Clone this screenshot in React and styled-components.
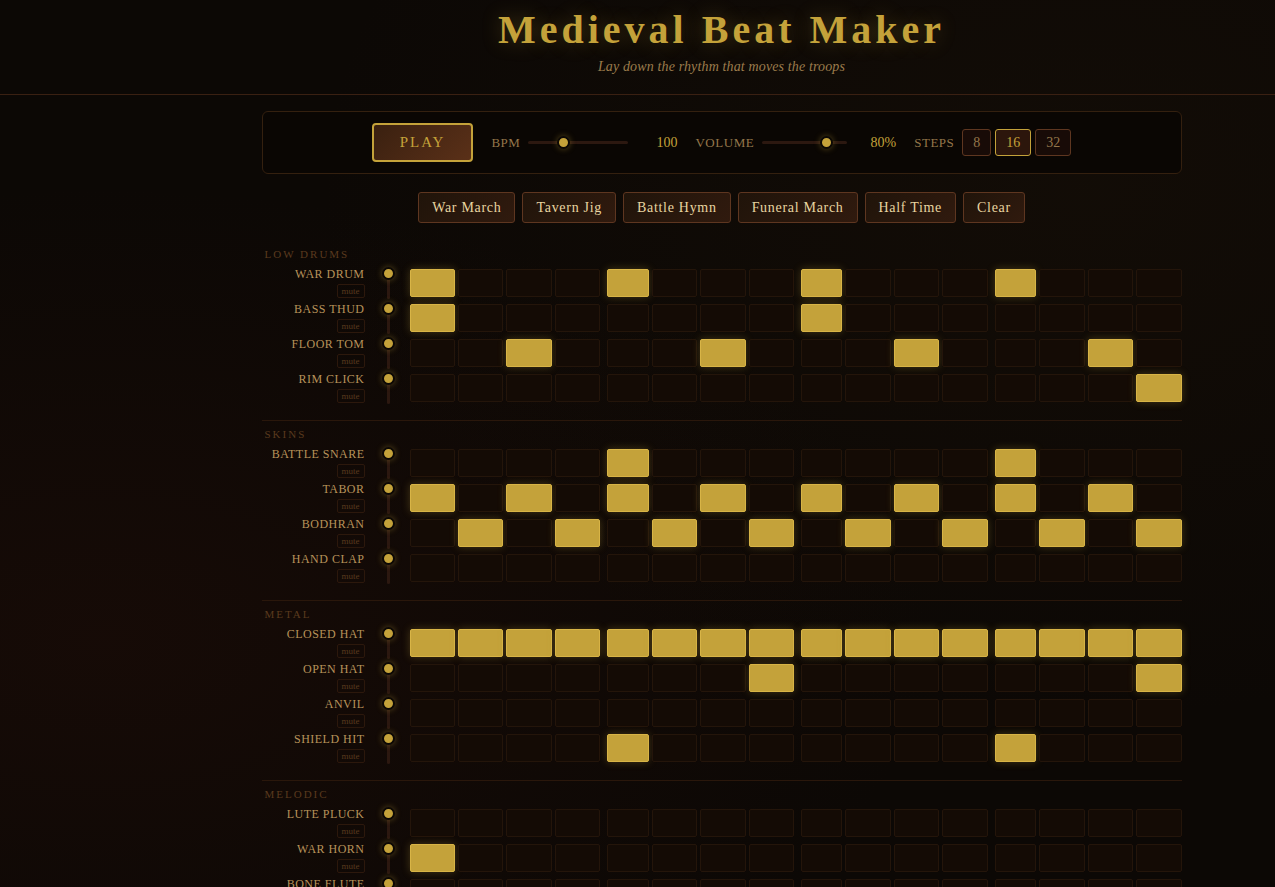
import { useState } from 'react';
import styled, { createGlobalStyle, css } from 'styled-components';

const GlobalStyle = createGlobalStyle`
  * {
    box-sizing: border-box;
  }

  html {
    background: #0c0805;
    scrollbar-width: none;
  }

  body {
    margin: 0;
    color: #c4a23a;
    font-family: 'Palatino Linotype', 'Book Antiqua', Palatino, 'Liberation Serif', serif;
    background:
      radial-gradient(ellipse at 8% 68%, rgba(58, 20, 12, 0.22) 0%, transparent 50%),
      radial-gradient(ellipse at 85% 20%, rgba(50, 34, 14, 0.16) 0%, transparent 50%),
      #0c0805;
  }

  button, input {
    font-family: inherit;
    margin: 0;
  }

  button {
    cursor: pointer;
  }
`;

const Header = styled.header`
  padding: 6px 0 16px 168px;
  border-bottom: 1px solid #3a2012;
  text-align: center;
`;

const Title = styled.h1`
  margin: 0;
  font-size: 40px;
  line-height: 48px;
  letter-spacing: 4px;
  text-shadow: 0 0 20px rgba(196, 162, 58, 0.3);
`;

const Tagline = styled.p`
  margin: 0;
  padding-top: 2px;
  color: #9c7c4c;
  font-size: 14px;
  line-height: 22px;
  letter-spacing: 0.01em;
  font-style: italic;
`;

const Main = styled.main`
  padding: 16px 0 16px 168px;
`;

const Container = styled.div`
  max-width: 920px;
  margin: 0 auto;
`;

const Controls = styled.section`
  display: flex;
  flex-wrap: wrap;
  align-items: center;
  justify-content: center;
  gap: 18px;
  padding: 11px;
  background: #0a0603;
  border: 1px solid #34200f;
  border-radius: 6px;
`;

const PlayButton = styled.button`
  height: 39px;
  padding: 0 26px;
  color: #c4a23a;
  font-size: 15px;
  letter-spacing: 2px;
  text-transform: uppercase;
  background: linear-gradient(135deg, #3a2010, #5a3018);
  border: 2px solid #c4a23a;
  border-radius: 4px;
`;

const Control = styled.div`
  display: flex;
  align-items: center;
  gap: 8px;
`;

const controlLabel = css`
  color: #94764a;
  font-size: 13px;
  letter-spacing: 0.04em;
  text-transform: uppercase;
`;

const Label = styled.label`
  ${controlLabel}
`;

const Caption = styled.span`
  ${controlLabel}
`;

const Value = styled.output`
  min-width: 40px;
  margin-left: 1px;
  font-size: 14px;
  text-align: right;
`;

const thumb = css`
  width: 13px;
  height: 13px;
  background: #c4a23a;
  border: 2px solid #0c0805;
  border-radius: 50%;
  box-shadow: 0 0 6px rgba(196, 162, 58, 0.4);
`;

const Slider = styled.input`
  appearance: none;
  width: ${({ $width }) => $width}px;
  height: 3px;
  background: #2c1810;
  border-radius: 2px;

  &::-webkit-slider-thumb {
    appearance: none;
    ${thumb}
  }
`;

const VolumeSlider = styled.input`
  appearance: none;
  justify-self: center;
  width: 3px;
  height: 32px;
  background: #2c1810;
  border-radius: 2px;
  writing-mode: vertical-lr;
  direction: rtl;

  &::-webkit-slider-thumb {
    appearance: none;
    ${thumb}
  }
`;

const StepOptions = styled.div`
  display: flex;
  gap: 4px;
`;

const StepOption = styled.button`
  height: 27px;
  padding: 0 10px;
  color: ${({ $active }) => ($active ? '#c4a23a' : '#94764a')};
  font-size: 14px;
  background: ${({ $active }) => ($active ? '#2c160c' : '#180b07')};
  border: 1px solid ${({ $active }) => ($active ? '#c4a23a' : '#5e3620')};
  border-radius: 3px;
`;

const Presets = styled.div`
  display: flex;
  flex-wrap: wrap;
  justify-content: center;
  gap: 7px;
  margin: 18px 0 17px;
`;

const PresetButton = styled.button`
  height: 31px;
  padding: 0 13px;
  color: #e8d5a0;
  font-size: 14px;
  letter-spacing: 0.05em;
  background: linear-gradient(135deg, #20140a, #301a0e);
  border: 1px solid #5e3620;
  border-radius: 3px;
`;

const Group = styled.section`
  padding: 5px 0 15px;
  border-top: 1px solid ${({ $first }) => ($first ? 'transparent' : '#2a170b')};
`;

const GroupTitle = styled.h2`
  margin: 0 0 4px;
  padding-left: 3px;
  color: #5a3a1e;
  font-size: 11px;
  font-weight: 400;
  line-height: 16px;
  letter-spacing: 2px;
  text-transform: uppercase;
`;

const Tracks = styled.div`
  display: grid;
  gap: 1px;
`;

const Track = styled.div`
  display: grid;
  grid-template-columns: 105px 21px 1fr;
  align-items: center;
  gap: 11px;
  height: 34px;
`;

const TrackInfo = styled.div`
  display: flex;
  flex-direction: column;
  align-self: start;
  align-items: flex-end;
  gap: 2px;
  padding-right: 2px;
`;

const TrackName = styled.span`
  color: #b8935a;
  font-size: 12px;
  line-height: 16px;
  letter-spacing: 0.04em;
  text-transform: uppercase;
  white-space: nowrap;
`;

const MuteButton = styled.button`
  height: 14px;
  padding: 0 4px;
  color: #5a3a1e;
  font-size: 9px;
  line-height: 12px;
  background: transparent;
  border: 1px solid #2c180c;
  border-radius: 2px;
`;

const Steps = styled.div`
  display: grid;
  grid-template-columns: repeat(${({ $count }) => $count}, 1fr);
  gap: 3px;
`;

const Step = styled.button`
  height: 28px;
  padding: 0;
  background: #140b05;
  border: 1px solid #24150a;
  border-radius: 2px;

  &:nth-child(4n + 5) {
    margin-left: 4px;
  }

  ${({ $on }) =>
    $on &&
    css`
      background: #c4a23a;
      border-color: #d8b446;
      box-shadow: 0 0 8px rgba(196, 162, 58, 0.3);
    `}
`;

const GROUPS = [
  { title: 'Low Drums', tracks: ['War Drum', 'Bass Thud', 'Floor Tom', 'Rim Click'] },
  { title: 'Skins', tracks: ['Battle Snare', 'Tabor', 'Bodhran', 'Hand Clap'] },
  { title: 'Metal', tracks: ['Closed Hat', 'Open Hat', 'Anvil', 'Shield Hit'] },
  { title: 'Melodic', tracks: ['Lute Pluck', 'War Horn', 'Bone Flute'] },
];

const PRESETS = ['War March', 'Tavern Jig', 'Battle Hymn', 'Funeral March', 'Half Time', 'Clear'];

const WAR_MARCH = {
  'War Drum': [0, 4, 8, 12],
  'Bass Thud': [0, 8],
  'Floor Tom': [2, 6, 10, 14],
  'Rim Click': [15],
  'Battle Snare': [4, 12],
  Tabor: [0, 2, 4, 6, 8, 10, 12, 14],
  Bodhran: [1, 3, 5, 7, 9, 11, 13, 15],
  'Closed Hat': [0, 1, 2, 3, 4, 5, 6, 7, 8, 9, 10, 11, 12, 13, 14, 15],
  'Open Hat': [7, 15],
  'Shield Hit': [4, 12],
  'War Horn': [0],
};

export default function App() {
  const [bpm, setBpm] = useState(100);
  const [volume, setVolume] = useState(80);
  const [stepCount, setStepCount] = useState(16);
  const [playing, setPlaying] = useState(false);
  const [pattern, setPattern] = useState(WAR_MARCH);

  const toggleStep = (name, step) => {
    const steps = pattern[name] || [];
    const next = steps.includes(step) ? steps.filter((s) => s !== step) : [...steps, step];
    setPattern({ ...pattern, [name]: next });
  };

  const loadPreset = (name) => {
    if (name === 'Clear') setPattern({});
    if (name === 'War March') setPattern(WAR_MARCH);
  };

  return (
    <>
      <GlobalStyle />
      <Header>
        <Title>Medieval Beat Maker</Title>
        <Tagline>Lay down the rhythm that moves the troops</Tagline>
      </Header>
      <Main>
        <Container>
          <Controls>
            <PlayButton onClick={() => setPlaying(!playing)}>{playing ? 'Stop' : 'Play'}</PlayButton>
            <Control>
              <Label htmlFor="bpm">BPM</Label>
              <Slider
                id="bpm"
                type="range"
                min="40"
                max="220"
                value={bpm}
                $width={100}
                onChange={(e) => setBpm(Number(e.target.value))}
              />
              <Value htmlFor="bpm">{bpm}</Value>
            </Control>
            <Control>
              <Label htmlFor="volume">Volume</Label>
              <Slider
                id="volume"
                type="range"
                min="0"
                max="100"
                value={volume}
                $width={85}
                onChange={(e) => setVolume(Number(e.target.value))}
              />
              <Value htmlFor="volume">{volume}%</Value>
            </Control>
            <Control>
              <Caption id="steps-label">Steps</Caption>
              <StepOptions role="group" aria-labelledby="steps-label">
                {[8, 16, 32].map((count) => (
                  <StepOption
                    key={count}
                    $active={count === stepCount}
                    aria-pressed={count === stepCount}
                    onClick={() => setStepCount(count)}
                  >
                    {count}
                  </StepOption>
                ))}
              </StepOptions>
            </Control>
          </Controls>

          <Presets>
            {PRESETS.map((name) => (
              <PresetButton key={name} onClick={() => loadPreset(name)}>
                {name}
              </PresetButton>
            ))}
          </Presets>

          {GROUPS.map((group, i) => (
            <Group key={group.title} $first={i === 0}>
              <GroupTitle>{group.title}</GroupTitle>
              <Tracks>
                {group.tracks.map((name) => (
                  <Track key={name}>
                    <TrackInfo>
                      <TrackName>{name}</TrackName>
                      <MuteButton aria-label={`mute ${name}`}>mute</MuteButton>
                    </TrackInfo>
                    <VolumeSlider type="range" defaultValue={100} aria-label={`${name} volume`} />
                    <Steps $count={stepCount}>
                      {Array.from({ length: stepCount }, (_, step) => {
                        const on = (pattern[name] || []).includes(step);
                        return (
                          <Step
                            key={step}
                            $on={on}
                            aria-pressed={on}
                            aria-label={`${name} step ${step + 1}`}
                            onClick={() => toggleStep(name, step)}
                          />
                        );
                      })}
                    </Steps>
                  </Track>
                ))}
              </Tracks>
            </Group>
          ))}
        </Container>
      </Main>
    </>
  );
}
